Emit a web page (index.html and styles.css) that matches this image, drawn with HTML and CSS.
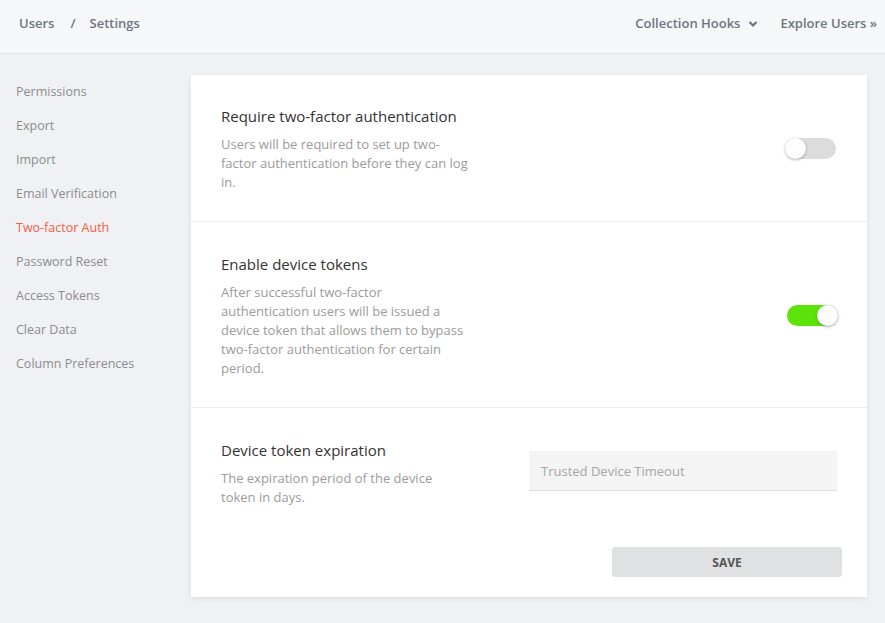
FILE: index.html
```html
<!DOCTYPE html>
<html>
<head>
<meta charset="utf-8">
<link rel="stylesheet" href="styles.css">
</head>
<body>
<header class="topbar">
  <nav class="crumbs">
    <span class="crumb">Users</span>
    <span class="sep">/</span>
    <span class="crumb">Settings</span>
  </nav>
  <div class="actions">
    <span class="action">Collection Hooks
      <svg class="chev" width="10" height="8" viewBox="0 0 10 8"><path d="M1.5 2 L5 5.5 L8.5 2" fill="none" stroke="#6b7280" stroke-width="2.2"/></svg>
    </span>
    <span class="action">Explore Users »</span>
  </div>
</header>
<div class="layout">
  <aside class="sidebar">
    <a class="nav">Permissions</a>
    <a class="nav">Export</a>
    <a class="nav">Import</a>
    <a class="nav">Email Verification</a>
    <a class="nav active">Two-factor Auth</a>
    <a class="nav">Password Reset</a>
    <a class="nav">Access Tokens</a>
    <a class="nav">Clear Data</a>
    <a class="nav">Column Preferences</a>
  </aside>
  <main class="card">
    <section class="row first">
      <div class="info">
        <h3 class="title">Require two-factor authentication</h3>
        <p class="desc">Users will be required to set up two-factor authentication before they can log in.</p>
      </div>
      <div class="control">
        <span class="toggle"><span class="knob"></span></span>
      </div>
    </section>
    <section class="row">
      <div class="info">
        <h3 class="title">Enable device tokens</h3>
        <p class="desc">After successful two-factor authentication users will be issued a device token that allows them to bypass two-factor authentication for certain period.</p>
      </div>
      <div class="control on-wrap">
        <span class="toggle on"><span class="knob"></span></span>
      </div>
    </section>
    <section class="row last">
      <div class="info half">
        <h3 class="title">Device token expiration</h3>
        <p class="desc narrow">The expiration period of the device token in days.</p>
      </div>
      <div class="half">
        <input class="field" type="text" placeholder="Trusted Device Timeout">
      </div>
    </section>
    <div class="footer">
      <button class="save">SAVE</button>
    </div>
  </main>
</div>
</body>
</html>
```
FILE: styles.css
```css
* { box-sizing: border-box; }
html, body { margin: 0; padding: 0; }
body {
  background: #f0f1f5;
  font-family: "Open Sans", "Liberation Sans", sans-serif;
  width: 885px;
  height: 623px;
  overflow: hidden;
}
.topbar {
  height: 54px;
  background: #f6f7f9;
  border-bottom: 1px solid #e3e5ea;
  display: flex;
  align-items: flex-start;
  justify-content: space-between;
  padding: 14px 8px 0 19px;
  font-size: 13px;
  line-height: 18px;
  font-weight: 600;
  color: #6e7582;
}
.crumbs { display: flex; }
.sep { margin: 0 14px 0 16px; }
.actions { display: flex; align-items: center; gap: 22px; }
.action { display: flex; align-items: center; gap: 8px; }
.chev { margin-top: 1px; }
.layout {
  display: flex;
  padding-top: 21px;
}
.sidebar {
  width: 191px;
  padding-left: 16px;
  display: flex;
  flex-direction: column;
  padding-top: 8px;
}
.nav {
  font-size: 12.5px;
  color: #8c8c8c;
  height: 34px;
  line-height: 18px;
}
.nav.active { color: #f2603f; }
.card {
  width: 676px;
  height: 522px;
  background: #fff;
  box-shadow: 0 2px 6px rgba(0,0,0,0.08);
  display: flex;
  flex-direction: column;
}
.row {
  display: flex;
  justify-content: space-between;
  align-items: center;
  padding: 32px 31px 30px 30px;
  border-bottom: 1px solid #ececec;
}
.row.first { padding-top: 31px; }
.row.last { border-bottom: none; align-items: flex-start; padding-bottom: 0; padding-right: 30px; }
.info { width: 260px; }
.half { width: 50%; }
.title {
  margin: 0 0 9px;
  font-size: 15px;
  font-weight: 400;
  color: #333;
  line-height: 20px;
}
.desc {
  margin: 0;
  font-size: 13px;
  line-height: 18.8px;
  color: #9b9b9b;
  width: 250px;
}
.desc.narrow { width: 230px; }
.on-wrap { margin-right: -2px; }
.toggle {
  display: block;
  width: 51px;
  height: 21px;
  border-radius: 11px;
  background: #dcdcdc;
  position: relative;
}
.toggle .knob {
  position: absolute;
  left: 0;
  top: 0;
  width: 21px;
  height: 21px;
  border-radius: 50%;
  background: #fdfdfd;
  box-shadow: 0 1px 3px rgba(0,0,0,0.3);
}
.toggle.on { background: #5ce40a; }
.toggle.on .knob { left: 30px; }
.field {
  display: block;
  width: 100%;
  height: 40px;
  margin-top: 11px;
  border: none;
  border-bottom: 1px solid #dcdcdc;
  background: #f4f4f4;
  padding: 0 12px;
  font-family: inherit;
  font-size: 13px;
  outline: none;
}
.field::placeholder { color: #a6a6a6; }
.footer {
  display: flex;
  justify-content: flex-end;
  padding: 0 25px 20px;
  margin-top: auto;
}
.save {
  width: 230px;
  height: 30px;
  border: none;
  border-radius: 3px;
  background: #e0e1e3;
  color: #555;
  font-family: inherit;
  font-weight: 700;
  font-size: 12px;
}
```
